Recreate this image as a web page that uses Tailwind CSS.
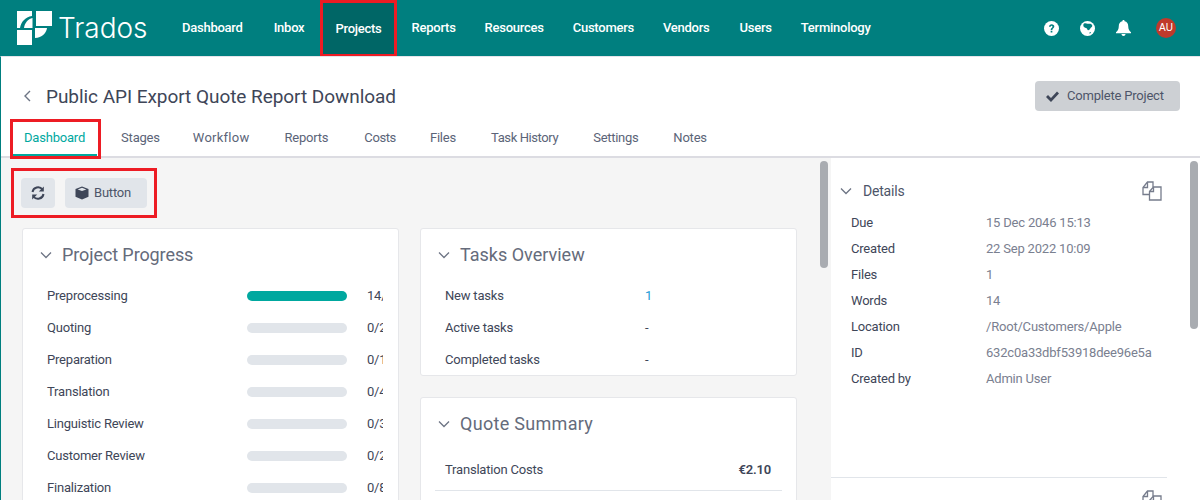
<!DOCTYPE html>
<html lang="en">
<head>
    <meta charset="UTF-8">
    <title>Trados - Project Dashboard</title>
    <script src="https://cdn.jsdelivr.net/npm/@tailwindcss/browser@4"></script>
</head>
<body class="w-[1200px] h-[500px] overflow-hidden relative bg-white font-['Roboto',sans-serif] text-[13px] tracking-[-0.2px] text-[#3e4658]">

<!-- Top bar -->
<header class="h-[56px] bg-[#007f7f] flex items-stretch text-white">
    <div class="w-[167px] pl-[17px] flex items-center shrink-0">
        <svg width="35" height="34" viewBox="0 0 35 34" fill="#fff" class="shrink-0 -mt-[1px]">
            <path d="M0 0H15V5C8 6 4 11 3 17H0Z"/>
            <path d="M15.500 7V17H7C7.500 12 11 8 15.500 7Z"/>
            <path d="M19 0H35V15H19Z"/>
            <path d="M18 17H30C29.500 22 25 26.500 18 27Z"/>
            <path d="M0 19H15V34H0Z"/>
        </svg>
        <span class="ml-[6px] font-['Inter',sans-serif] font-light text-[28px] tracking-normal leading-none">Trados</span>
    </div>
    <nav class="flex items-stretch font-medium tracking-[-0.25px]">
        <a class="pl-[15px] pr-[16px] flex items-center">Dashboard</a>
        <a class="pl-[15px] pr-[16px] flex items-center">Inbox</a>
        <a class="px-[12px] flex items-center bg-[#006666] border-[3px] border-[#ed1c24] border-b-[2px]">Projects</a>
        <a class="pl-[15px] pr-[14px] flex items-center">Reports</a>
        <a class="pl-[15px] pr-[14px] flex items-center">Resources</a>
        <a class="pl-[15px] pr-[14px] flex items-center">Customers</a>
        <a class="px-[15px] flex items-center">Vendors</a>
        <a class="pl-[15px] pr-[14px] flex items-center">Users</a>
        <a class="px-[15px] flex items-center">Terminology</a>
    </nav>
    <div class="ml-auto flex items-center pr-[24px]">
        <svg width="15" height="15" viewBox="0 0 16 16"><circle cx="8" cy="8" r="8" fill="#fff"/><path d="M5.300 6.200C5.400 4.500 6.600 3.500 8.200 3.500C9.800 3.500 11 4.500 11 5.900C11 7.900 8.900 7.800 8.900 9.500H7.100C7.100 7.100 9 7.200 9 6C9 5.400 8.600 5.100 8.100 5.100C7.600 5.100 7.200 5.500 7.100 6.200ZM7.100 10.400H8.900V12.300H7.100Z" fill="#007f7f"/></svg>
        <svg width="15" height="15" viewBox="0 0 16 16" class="ml-[21px]"><circle cx="8" cy="8" r="8" fill="#fff"/><path d="M4 3C5.500 1.800 7 2.800 8 3C9.500 3.300 11.500 2 13 4.500C13.500 6 12 6.500 11 8C10.200 9.300 9.500 10 8.500 9.800C7.500 9.300 8 8 6.500 7.500C5 7 4 6.500 3.700 5.500C3.500 4.500 3.500 3.500 4 3ZM10 12.500C10.800 12 11.800 12 11.800 12.500C11.500 13.300 10.500 13.500 10 13.300Z" fill="#007f7f"/></svg>
        <svg width="15" height="16" viewBox="0 0 15 16" fill="#fff" class="ml-[21px]"><path d="M7.500 0C8.200 0 8.600 0.500 8.600 1.200C11 1.700 12.200 3.500 12.200 6C12.200 9.500 13.500 10.800 15 12.200V13.300H0V12.200C1.500 10.800 2.800 9.500 2.800 6C2.800 3.500 4 1.700 6.400 1.200C6.400 0.500 6.800 0 7.500 0ZM5.500 14H9.500C9.500 15.200 8.600 16 7.500 16C6.400 16 5.500 15.200 5.500 14Z"/></svg>
        <div class="ml-[25px] w-[20px] h-[20px] rounded-full bg-[#c0392b] flex items-center justify-center text-[10px] font-medium tracking-normal font-['Liberation_Sans',sans-serif] -mt-[1px]">AU</div>
    </div>
</header>

<div class="h-[444px] border-t border-[#e4e4ea] border-l border-l-[#007f7f] flex flex-col">
    <!-- Title -->
    <div class="h-[63px] flex items-center pl-[21px] pr-[20px] pt-[15px] shrink-0">
        <svg width="10" height="14" viewBox="0 0 10 14" fill="none" stroke="#6d7484" stroke-width="1.400" class="shrink-0"><path d="M8 2L3 7L8 12"/></svg>
        <h1 class="ml-[14px] text-[19px] tracking-[-0.05px] leading-none">Public API Export Quote Report Download</h1>
        <button class="ml-auto w-[145px] h-[30px] rounded-[4px] bg-[#cdd0d4] flex items-center pl-[11px] text-[#4d5569]">
            <svg width="13" height="11" viewBox="0 0 13 11" fill="#3e4658"><path d="M0 6L2 4L5 7L11 0.500L13 2.500L5 11Z"/></svg>
            <span class="ml-[8px]">Complete Project</span>
        </button>
    </div>
    <!-- Tabs -->
    <div class="h-[38px] border-b-2 border-[#dcdce2] flex items-stretch pl-[11px] shrink-0 text-[#5b6478]">
        <a class="px-[12px] mr-[12px] flex items-center pt-[1px] text-[#00a89f] border-b-[3px] border-[#00a89f] h-[37px]">Dashboard</a>
        <a class="px-[12px] mr-[9px] flex items-center">Stages</a>
        <a class="px-[12px] mr-[11px] flex items-center tracking-[0.25px]">Workflow</a>
        <a class="px-[12px] mr-[12px] flex items-center">Reports</a>
        <a class="px-[12px] mr-[10px] flex items-center tracking-[-0.4px]">Costs</a>
        <a class="px-[12px] mr-[11px] flex items-center">Files</a>
        <a class="px-[12px] mr-[11px] flex items-center tracking-[-0.4px]">Task History</a>
        <a class="px-[12px] mr-[11px] flex items-center tracking-[-0.3px]">Settings</a>
        <a class="px-[12px] mr-[11px] flex items-center">Notes</a>
    </div>
    <!-- Body -->
    <div class="flex flex-1 min-h-0">
        <main class="w-[830px] shrink-0 bg-[#f5f5f5] pl-[20px] pt-[20px] relative overflow-hidden">
            <div class="flex gap-[10px]">
                <button class="w-[34px] h-[30px] rounded-[4px] bg-[#e1e5ea] flex items-center justify-center">
                    <svg width="14" height="14" viewBox="0 0 14 14" fill="none" stroke="#3e4658" stroke-width="2"><path d="M1.500 6A5.600 5.600 0 0 1 11.500 3.500M12.500 8A5.600 5.600 0 0 1 2.500 10.500"/><path d="M12.800 0.500V5.500H7.800ZM1.200 13.500V8.500H6.200Z" fill="#3e4658" stroke="none"/></svg>
                </button>
                <button class="w-[82px] h-[30px] rounded-[4px] bg-[#e1e5ea] flex items-center pl-[10px] text-[#4d5569]">
                    <svg width="14" height="14" viewBox="0 0 14 14"><path d="M7 0.500L13.500 3V10.800L7 13.500L0.500 10.800V3Z" fill="#3e4658"/><path d="M7 1.800L11.300 3.400L7 5L2.700 3.400Z" fill="#e1e5ea"/></svg>
                    <span class="ml-[5px]">Button</span>
                </button>
            </div>
            <div class="flex items-start gap-[21px] mt-[20px] pl-[1px]">
                <!-- Project Progress -->
                <section class="w-[377px] h-[300px] shrink-0 bg-white border border-[#e6e7ea] rounded-[3px] pl-[17px]">
                    <div class="h-[51px] flex items-center">
                        <svg width="12" height="8" viewBox="0 0 12 8" fill="none" stroke="#6d7484" stroke-width="1.300" class="shrink-0"><path d="M1 1.500L6 6.500L11 1.500"/></svg>
                        <h2 class="ml-[10px] text-[18px] tracking-[-0.1px] text-[#656b7b]">Project Progress</h2>
                    </div>
                    <div class="flex flex-col pl-[7px] mr-[15px] overflow-hidden">
                        <div class="h-[32px] flex items-center"><span class="w-[200px] shrink-0">Preprocessing</span><span class="w-[100px] h-[10px] shrink-0 rounded-full bg-[#00a89f]"></span><span class="ml-[20px] shrink-0">14/14</span></div>
                        <div class="h-[32px] flex items-center"><span class="w-[200px] shrink-0">Quoting</span><span class="w-[100px] h-[10px] shrink-0 rounded-full bg-[#e1e5ea]"></span><span class="ml-[20px] shrink-0">0/26</span></div>
                        <div class="h-[32px] flex items-center"><span class="w-[200px] shrink-0">Preparation</span><span class="w-[100px] h-[10px] shrink-0 rounded-full bg-[#e1e5ea]"></span><span class="ml-[20px] shrink-0">0/14</span></div>
                        <div class="h-[32px] flex items-center"><span class="w-[200px] shrink-0">Translation</span><span class="w-[100px] h-[10px] shrink-0 rounded-full bg-[#e1e5ea]"></span><span class="ml-[20px] shrink-0">0/42</span></div>
                        <div class="h-[32px] flex items-center"><span class="w-[200px] shrink-0">Linguistic Review</span><span class="w-[100px] h-[10px] shrink-0 rounded-full bg-[#e1e5ea]"></span><span class="ml-[20px] shrink-0">0/35</span></div>
                        <div class="h-[32px] flex items-center"><span class="w-[200px] shrink-0">Customer Review</span><span class="w-[100px] h-[10px] shrink-0 rounded-full bg-[#e1e5ea]"></span><span class="ml-[20px] shrink-0">0/21</span></div>
                        <div class="h-[32px] flex items-center"><span class="w-[200px] shrink-0">Finalization</span><span class="w-[100px] h-[10px] shrink-0 rounded-full bg-[#e1e5ea]"></span><span class="ml-[20px] shrink-0">0/84</span></div>
                    </div>
                </section>
                <div class="w-[377px] shrink-0 flex flex-col gap-[21px]">
                    <!-- Tasks Overview -->
                    <section class="h-[148px] bg-white border border-[#e6e7ea] rounded-[3px] pl-[17px]">
                        <div class="h-[51px] flex items-center">
                            <svg width="12" height="8" viewBox="0 0 12 8" fill="none" stroke="#6d7484" stroke-width="1.300" class="shrink-0"><path d="M1 1.500L6 6.500L11 1.500"/></svg>
                            <h2 class="ml-[10px] text-[18px] tracking-normal text-[#656b7b]">Tasks Overview</h2>
                        </div>
                        <div class="pl-[7px]">
                            <div class="h-[32px] flex items-center"><span class="w-[200px]">New tasks</span><span class="text-[#1c9ad6]">1</span></div>
                            <div class="h-[32px] flex items-center"><span class="w-[200px]">Active tasks</span><span>-</span></div>
                            <div class="h-[32px] flex items-center"><span class="w-[200px]">Completed tasks</span><span>-</span></div>
                        </div>
                    </section>
                    <!-- Quote Summary -->
                    <section class="h-[130px] bg-white border border-[#e6e7ea] rounded-[3px] px-[14px]">
                        <div class="h-[51px] flex items-center pl-[3px]">
                            <svg width="12" height="8" viewBox="0 0 12 8" fill="none" stroke="#6d7484" stroke-width="1.300" class="shrink-0"><path d="M1 1.500L6 6.500L11 1.500"/></svg>
                            <h2 class="ml-[10px] text-[18px] tracking-[0.3px] text-[#656b7b]">Quote Summary</h2>
                        </div>
                        <div class="h-[42px] flex items-center justify-between pl-[10px] pr-[11px] border-b border-[#e1e5ea]">
                            <span>Translation Costs</span><span class="font-semibold">€2.10</span>
                        </div>
                    </section>
                </div>
            </div>
            <div class="absolute left-[819px] top-[3px] w-[8px] h-[107px] rounded-full bg-[#a9acb1]"></div>
        </main>
        <!-- Details panel -->
        <aside class="flex-1 relative bg-white overflow-hidden">
            <div class="h-[320px] w-[336px] border-b border-[#e1e5ea] pl-[9px] pr-[5px] pt-[20px]">
                <div class="h-[26px] flex items-center">
                    <svg width="12" height="8" viewBox="0 0 12 8" fill="none" stroke="#6d7484" stroke-width="1.300" class="shrink-0"><path d="M1 1.500L6 6.500L11 1.500"/></svg>
                    <h3 class="ml-[11px] text-[14px] text-[#4d5569]">Details</h3>
                    <svg width="20" height="20" viewBox="0 0 20 20" fill="none" stroke="#767c8c" stroke-width="1.300" class="ml-auto shrink-0"><path d="M7 13.500H1V6.500L5.500 1H11V6"/><path d="M1 6.500H5.500V1"/><path d="M7.500 19V10.500L11.500 6H19V19Z" fill="#fff"/><path d="M7.500 10.500H11.500V6"/></svg>
                </div>
                <dl class="pl-[11px] mt-[6px]">
                    <div class="h-[26px] flex items-center"><dt class="w-[135px]">Due</dt><dd class="text-[#7a8090]">15 Dec 2046 15:13</dd></div>
                    <div class="h-[26px] flex items-center"><dt class="w-[135px]">Created</dt><dd class="text-[#7a8090]">22 Sep 2022 10:09</dd></div>
                    <div class="h-[26px] flex items-center"><dt class="w-[135px]">Files</dt><dd class="text-[#7a8090]">1</dd></div>
                    <div class="h-[26px] flex items-center"><dt class="w-[135px]">Words</dt><dd class="text-[#7a8090]">14</dd></div>
                    <div class="h-[26px] flex items-center"><dt class="w-[135px]">Location</dt><dd class="text-[#7a8090]">/Root/Customers/Apple</dd></div>
                    <div class="h-[26px] flex items-center"><dt class="w-[135px]">ID</dt><dd class="text-[#7a8090]">632c0a33dbf53918dee96e5a</dd></div>
                    <div class="h-[26px] flex items-center"><dt class="w-[135px]">Created by</dt><dd class="text-[#7a8090]">Admin User</dd></div>
                </dl>
            </div>
            <div class="w-[336px] pr-[5px] pt-[12px] flex justify-end">
                <svg width="20" height="20" viewBox="0 0 20 20" fill="none" stroke="#767c8c" stroke-width="1.300" class="shrink-0"><path d="M7 13.500H1V6.500L5.500 1H11V6"/><path d="M1 6.500H5.500V1"/><path d="M7.500 19V10.500L11.500 6H19V19Z" fill="#fff"/><path d="M7.500 10.500H11.500V6"/></svg>
            </div>
            <div class="absolute left-[359px] top-[3px] w-[8px] h-[168px] rounded-full bg-[#a9acb1]"></div>
        </aside>
    </div>
</div>

<!-- Red annotation boxes -->
<div class="absolute left-[10px] top-[119px] w-[91px] h-[40px] border-[3px] border-[#ed1c24]"></div>
<div class="absolute left-[11px] top-[168px] w-[146px] h-[50px] border-[3px] border-[#ed1c24]"></div>

</body>
</html>
